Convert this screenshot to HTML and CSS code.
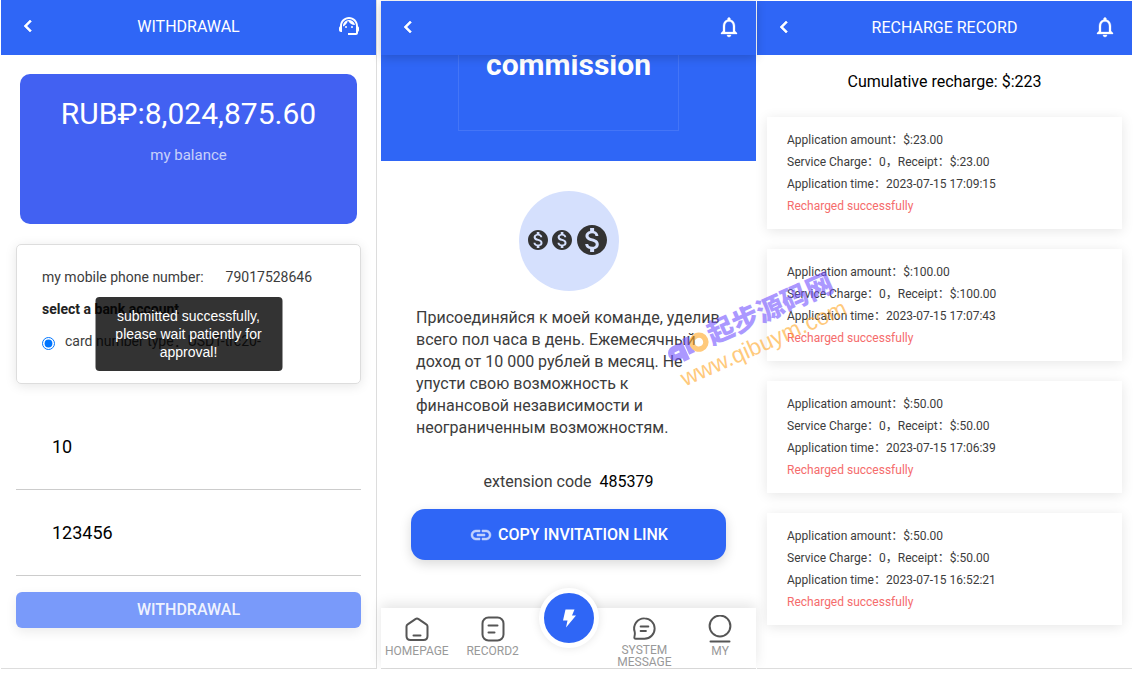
FILE: index.html
```html
<!DOCTYPE html>
<html lang="en">
<head>
    <meta charset="UTF-8">
    <meta name="viewport" content="width=device-width, initial-scale=1.0">
    <title>Withdrawal</title>
    <link rel="stylesheet" href="styles.css">
</head>
<body>
    <!-- shared icons -->
    <svg class="sprite" width="0" height="0" aria-hidden="true">
        <symbol id="back" viewBox="0 0 24 24"><path d="M15.41 7.41L14 6l-6 6 6 6 1.41-1.41L10.83 12z" stroke="currentColor" stroke-width=".6"/></symbol>
        <symbol id="bell" viewBox="0 0 24 24"><path d="M12 22c1.1 0 2-.9 2-2h-4c0 1.1.9 2 2 2zm6-6v-5c0-3.07-1.63-5.64-4.5-6.32V4c0-.83-.67-1.5-1.5-1.5s-1.5.67-1.5 1.5v.68C7.64 5.36 6 7.92 6 11v5l-2 2v1h16v-1l-2-2zm-2 1H8v-6c0-2.48 1.51-4.5 4-4.5s4 2.02 4 4.5v6z" stroke="currentColor" stroke-width=".3"/></symbol>
        <symbol id="coin" viewBox="0 0 24 24"><path d="M12 2C6.48 2 2 6.48 2 12s4.48 10 10 10 10-4.48 10-10S17.52 2 12 2zm1.41 16.09V20h-2.67v-1.93c-1.71-.36-3.16-1.46-3.27-3.4h1.96c.1 1.05.82 1.87 2.65 1.87 1.96 0 2.4-.98 2.4-1.59 0-.83-.44-1.61-2.67-2.14-2.48-.6-4.18-1.62-4.18-3.67 0-1.72 1.39-2.84 3.11-3.21V4h2.67v1.95c1.86.45 2.79 1.86 2.85 3.39H14.3c-.05-1.11-.64-1.87-2.22-1.87-1.5 0-2.4.68-2.4 1.64 0 .84.65 1.39 2.67 1.91s4.18 1.39 4.18 3.91c-.02 1.83-1.38 2.83-3.12 3.16z"/></symbol>
    </svg>

    <div class="screens">
        <section class="screen screen-withdraw">
            <header class="bar">
                <button class="icon-btn" aria-label="Back"><svg class="icon"><use href="#back"/></svg></button>
                <h1>WITHDRAWAL</h1>
                <button class="icon-btn" aria-label="Support">
                    <svg class="icon" viewBox="0 0 24 24"><path d="M21 12.22C21 6.73 16.74 3 12 3c-4.69 0-9 3.65-9 9.28-.6.34-1 .98-1 1.72v2c0 1.1.9 2 2 2h1v-6.1c0-3.87 3.13-7 7-7s7 3.13 7 7V19h-8v2h8c1.1 0 2-.9 2-2v-1.22c.59-.31 1-.92 1-1.64v-2.3c0-.7-.41-1.31-1-1.62z"/><circle cx="9" cy="13" r="1"/><circle cx="15" cy="13" r="1"/><path d="M18 11.03C17.52 8.18 15.04 6 12.05 6c-3.03 0-6.29 2.51-6.03 6.45 2.47-1.01 4.33-3.21 4.86-5.89 1.31 2.63 4 4.44 7.12 4.47z"/></svg>
                </button>
            </header>

            <div class="balance">
                <p class="amount">RUB₽:8,024,875.60</p>
                <p class="caption">my balance</p>
            </div>

            <form class="withdraw-form">
                <div class="account">
                    <p><span class="phone-label">my mobile phone number:</span>79017528646</p>
                    <p class="account-title">select a bank account</p>
                    <div class="option">
                        <input type="radio" id="card" name="card" checked>
                        <label for="card" lang="zh-CN">card number type：USDT-trc20-</label>
                    </div>
                    <div class="toast" role="status">submitted successfully, please wait patiently for approval!</div>
                </div>
                <input class="field" type="text" value="10" aria-label="Amount">
                <input class="field" type="text" value="123456" aria-label="Password">
                <button class="submit" type="button">WITHDRAWAL</button>
            </form>
        </section>

        <section class="screen screen-team">
            <header class="bar bar-shadow">
                <button class="icon-btn" aria-label="Back"><svg class="icon"><use href="#back"/></svg></button>
                <button class="icon-btn" aria-label="Notifications"><svg class="icon"><use href="#bell"/></svg></button>
            </header>

            <div class="hero"><h2>commission</h2></div>

            <div class="team">
                <div class="coins">
                    <svg class="coin"><use href="#coin"/></svg>
                    <svg class="coin"><use href="#coin"/></svg>
                    <svg class="coin coin-big"><use href="#coin"/></svg>
                </div>
                <p class="pitch" lang="ru">Присоединяйся к моей команде, уделив всего пол часа в день. Ежемесячный доход от 10 000 рублей в месяц. Не упусти свою возможность к финансовой независимости и неограниченным возможностям.</p>
                <p class="code"><span>extension code</span><b>485379</b></p>
                <button class="copy">
                    <svg class="icon" viewBox="0 0 24 24"><path d="M3.9 12c0-1.71 1.39-3.1 3.1-3.1h4V7H7c-2.76 0-5 2.24-5 5s2.24 5 5 5h4v-1.9H7c-1.71 0-3.1-1.39-3.1-3.1zM8 13h8v-2H8v2zm9-6h-4v1.9h4c1.71 0 3.1 1.39 3.1 3.1s-1.39 3.1-3.1 3.1h-4V17h4c2.76 0 5-2.24 5-5s-2.24-5-5-5z" stroke="currentColor" stroke-width=".5"/></svg>
                    COPY INVITATION LINK
                </button>
            </div>

            <nav class="tabs">
                <a href="#">
                    <svg viewBox="0 0 28 28"><path d="M3.5 11.5c0-1 .4-1.700 1.200-2.200L12.400 4.100q1.600-1 3.200 0l7.700 5.200c.8.500 1.200 1.200 1.200 2.200V21q0 4-4 4h-13q-4 0-4-4z"/><path d="M10.500 20.500h7"/></svg>
                    HOMEPAGE
                </a>
                <a href="#">
                    <svg viewBox="0 0 28 28"><rect x="3.500" y="2.500" width="21" height="23" rx="6"/><path d="M9.500 10.500h9M9.500 17.500h6"/></svg>
                    RECORD2
                </a>
                <a class="fab" href="#" aria-label="Start">
                    <svg viewBox="0 0 24 24"><path d="M8.500 3.500h9l-2.500 6h4L9 21.500l1.500-7H6z"/></svg>
                </a>
                <a href="#">
                    <svg viewBox="0 0 28 28"><path d="M14.500 3.500a10.500 10.500 0 1 1 0 21.100H5.500q-2 0-1.400-2 .8-2.600.3-5A10.500 10.500 0 0 1 14.500 3.500z"/><path d="M10.500 12h8M10.500 16.500h5.500"/></svg>
                    SYSTEM MESSAGE
                </a>
                <a href="#">
                    <svg viewBox="0 0 28 28"><circle cx="14" cy="11" r="10.400"/><path d="M4.500 26.500h19"/></svg>
                    MY
                </a>
            </nav>
        </section>

        <section class="screen screen-records">
            <header class="bar">
                <button class="icon-btn" aria-label="Back"><svg class="icon"><use href="#back"/></svg></button>
                <h1>RECHARGE RECORD</h1>
                <button class="icon-btn" aria-label="Notifications"><svg class="icon"><use href="#bell"/></svg></button>
            </header>

            <p class="total">Cumulative recharge: $:223</p>

            <ul class="records" lang="zh-CN">
                <li>
                    <p>Application amount：$:23.00</p>
                    <p>Service Charge：0，Receipt：$:23.00</p>
                    <p>Application time：2023-07-15 17:09:15</p>
                    <p class="status">Recharged successfully</p>
                </li>
                <li>
                    <p>Application amount：$:100.00</p>
                    <p>Service Charge：0，Receipt：$:100.00</p>
                    <p>Application time：2023-07-15 17:07:43</p>
                    <p class="status">Recharged successfully</p>
                </li>
                <li>
                    <p>Application amount：$:50.00</p>
                    <p>Service Charge：0，Receipt：$:50.00</p>
                    <p>Application time：2023-07-15 17:06:39</p>
                    <p class="status">Recharged successfully</p>
                </li>
                <li>
                    <p>Application amount：$:50.00</p>
                    <p>Service Charge：0，Receipt：$:50.00</p>
                    <p>Application time：2023-07-15 16:52:21</p>
                    <p class="status">Recharged successfully</p>
                </li>
            </ul>
        </section>
    </div>

    <!-- diagonal site watermark -->
    <div class="watermark">
        <div class="mark-name" lang="zh-CN">
            <svg viewBox="0 0 42 26" fill="none" stroke-width="6"><path stroke="#7455ff" d="M15 10.500H8a4 4 0 0 0 0 8h4M15 7.500V25M22 5v16"/><circle cx="32" cy="14" r="6.500" stroke="#ffa726" stroke-width="5"/></svg>
            起步源码网
        </div>
        <div class="mark-url">www.qibuym.com</div>
    </div>
</body>
</html>
```
FILE: styles.css
```css
* {
    box-sizing: border-box;
}
body {
    margin: 0;
    font-family: Roboto, "Noto Sans CJK SC", sans-serif;
    color: #3c3c3c;
    background-color: #fff;
}
h1, h2, p, ul {
    margin: 0;
    padding: 0;
}
button {
    font-family: inherit;
    border: none;
    cursor: pointer;
}
.sprite {
    position: absolute;
}
.screens {
    display: flex;
    min-height: calc(100vh - 5px);
    padding: 0 1px;
}
.screen {
    flex: 1;
    min-width: 0;
    display: flex;
    flex-direction: column;
    border-bottom: 1px solid #ddd;
}
.screen-withdraw {
    border-right: 1px solid #ddd;
    margin-right: 4px;
}
.screen-team {
    margin-right: 1px;
}
.screen-team, .screen-records {
    padding-top: 1px;
}

/* top bar */
.bar {
    display: flex;
    align-items: center;
    justify-content: space-between;
    height: 54px;
    padding: 0 15px 2px;
    color: #fff;
    background-color: #2f66f6;
}
.screen-withdraw .bar {
    height: 55px;
    padding-bottom: 3px;
}
.bar-shadow {
    position: relative;
    z-index: 1;
    box-shadow: 0 2px 10px rgba(0, 0, 0, 0.2);
}
.bar h1 {
    font-size: 16px;
    font-weight: 400;
}
.icon {
    display: block;
    width: 24px;
    height: 24px;
    fill: currentColor;
}
.icon-btn {
    padding: 0;
    color: inherit;
    background: none;
}

/* withdrawal */
.balance {
    height: 150px;
    margin: 19px 19px 20px;
    padding-top: 20px;
    border-radius: 10px;
    text-align: center;
    color: #fff;
    background-color: #4261f2;
}
.amount {
    font-size: 30px;
    line-height: 40px;
}
.caption {
    margin-top: 10px;
    font-size: 15px;
    line-height: 22px;
    opacity: 0.7;
}
.withdraw-form {
    display: flex;
    flex-direction: column;
    padding: 0 15px;
}
.account {
    position: relative;
    height: 140px;
    margin-bottom: 20px;
    padding: 16px 25px;
    border: 1px solid #ddd;
    border-radius: 5px;
    font-size: 14px;
    line-height: 32px;
    box-shadow: 0 2px 12px rgba(0, 0, 0, 0.1);
}
.phone-label {
    margin-right: 22px;
}
.account-title {
    font-weight: 700;
    color: #222;
}
.option {
    display: flex;
    align-items: center;
    gap: 10px;
}
.option input {
    margin: 4px 0 0;
}
.toast {
    position: absolute;
    top: 52px;
    left: 50%;
    width: 187px;
    padding: 10px 16px;
    transform: translateX(-50%);
    border-radius: 4px;
    text-align: center;
    font-family: "Liberation Sans", Arial, sans-serif;
    line-height: 18px;
    color: #fff;
    background-color: rgba(0, 0, 0, 0.8);
}
.field {
    height: 86px;
    padding: 0 36px;
    border: none;
    border-bottom: 1px solid #ccc;
    font-family: inherit;
    font-size: 18px;
    color: #000;
    background: none;
}
.submit {
    height: 36px;
    margin-top: 16px;
    padding-bottom: 3px;
    border-radius: 6px;
    font-size: 16px;
    font-weight: 500;
    color: rgba(255, 255, 255, 0.9);
    background-color: #799afa;
    box-shadow: 0 4px 12px rgba(0, 0, 0, 0.08);
}

/* team */
.hero {
    height: 106px;
    padding: 0 77px 30px;
    overflow: hidden;
    color: #fff;
    background-color: #2f66f6;
}
.hero h2 {
    height: 100%;
    border: 1px solid rgba(255, 255, 255, 0.1);
    border-top: none;
    text-align: center;
    font-size: 30px;
    font-weight: 700;
    line-height: 20px;
}
.team {
    flex: 1;
    display: flex;
    flex-direction: column;
    padding: 30px 30px 0;
}
.coins {
    display: flex;
    align-items: center;
    justify-content: center;
    width: 100px;
    height: 100px;
    margin: 0 auto 16px;
    padding: 0 1px 2px 0;
    border-radius: 50%;
    color: #333;
    background-color: #d5e0fd;
}
.coin {
    width: 24px;
    height: 24px;
    fill: currentColor;
}
.coin-big {
    width: 36px;
    height: 36px;
}
.pitch {
    padding: 0 5px;
    font-size: 16px;
    line-height: 22px;
}
.code {
    display: flex;
    justify-content: center;
    gap: 8px;
    margin: 32px 0 16px;
    font-size: 16px;
    line-height: 22px;
}
.code b {
    font-weight: 400;
    color: #000;
}
.copy {
    display: flex;
    align-items: center;
    justify-content: center;
    gap: 5px;
    height: 51px;
    border-radius: 14px;
    font-size: 16px;
    font-weight: 500;
    color: #fff;
    background-color: #2f66f6;
    box-shadow: 0 4px 12px rgba(0, 0, 0, 0.15);
}
.copy .icon {
    opacity: 0.7;
}
.tabs {
    display: flex;
    height: 60px;
    background-color: #fff;
    box-shadow: 0 -4px 12px rgba(0, 0, 0, 0.1);
}
.tabs a {
    flex: 1 1 0;
    min-width: 0;
    display: flex;
    flex-direction: column;
    align-items: center;
    gap: 2px;
    padding-top: 7px;
    text-align: center;
    text-decoration: none;
    font-size: 12px;
    line-height: 12px;
    color: #999;
}
.tabs a:first-child {
    margin-left: -2px;
}
.tabs a:last-child {
    margin-right: -2px;
}
.tabs svg {
    width: 28px;
    height: 28px;
    fill: none;
    stroke: #555;
    stroke-width: 2;
    stroke-linecap: round;
    stroke-linejoin: round;
}
.tabs .fab {
    flex: 0 0 60px;
    height: 60px;
    margin: -20px 8px 0;
    padding: 0;
    justify-content: center;
    border: 5px solid #fff;
    border-radius: 50%;
    background-color: #2f66f6;
    box-shadow: 0 0 10px rgba(0, 0, 0, 0.1);
}
.tabs .fab svg {
    width: 24px;
    height: 24px;
    fill: #fff;
    stroke: none;
}

/* recharge record */
.total {
    padding: 15px 10px 24px;
    text-align: center;
    font-size: 16px;
    line-height: 23px;
    color: #000;
}
.records {
    display: flex;
    flex-direction: column;
    gap: 20px;
    padding: 0 10px;
    list-style: none;
    font-size: 12px;
    line-height: 22px;
}
.records li {
    padding: 12px 20px;
    box-shadow: 0 2px 12px rgba(0, 0, 0, 0.1);
}
.records .status {
    color: #f56c6c;
}

.watermark {
    position: absolute;
    z-index: 2;
    top: 302px;
    left: 664px;
    transform: rotate(-24deg);
    opacity: 0.6;
    pointer-events: none;
    white-space: nowrap;
}
.mark-name {
    display: flex;
    align-items: center;
    font-size: 27px;
    font-weight: 900;
    line-height: 30px;
    color: #7455ff;
}
.mark-name svg {
    width: 46px;
    height: 28px;
}
.mark-url {
    padding-left: 4px;
    font-family: "Liberation Sans", Arial, sans-serif;
    font-size: 23px;
    line-height: 26px;
    color: #ffa726;
}
```
